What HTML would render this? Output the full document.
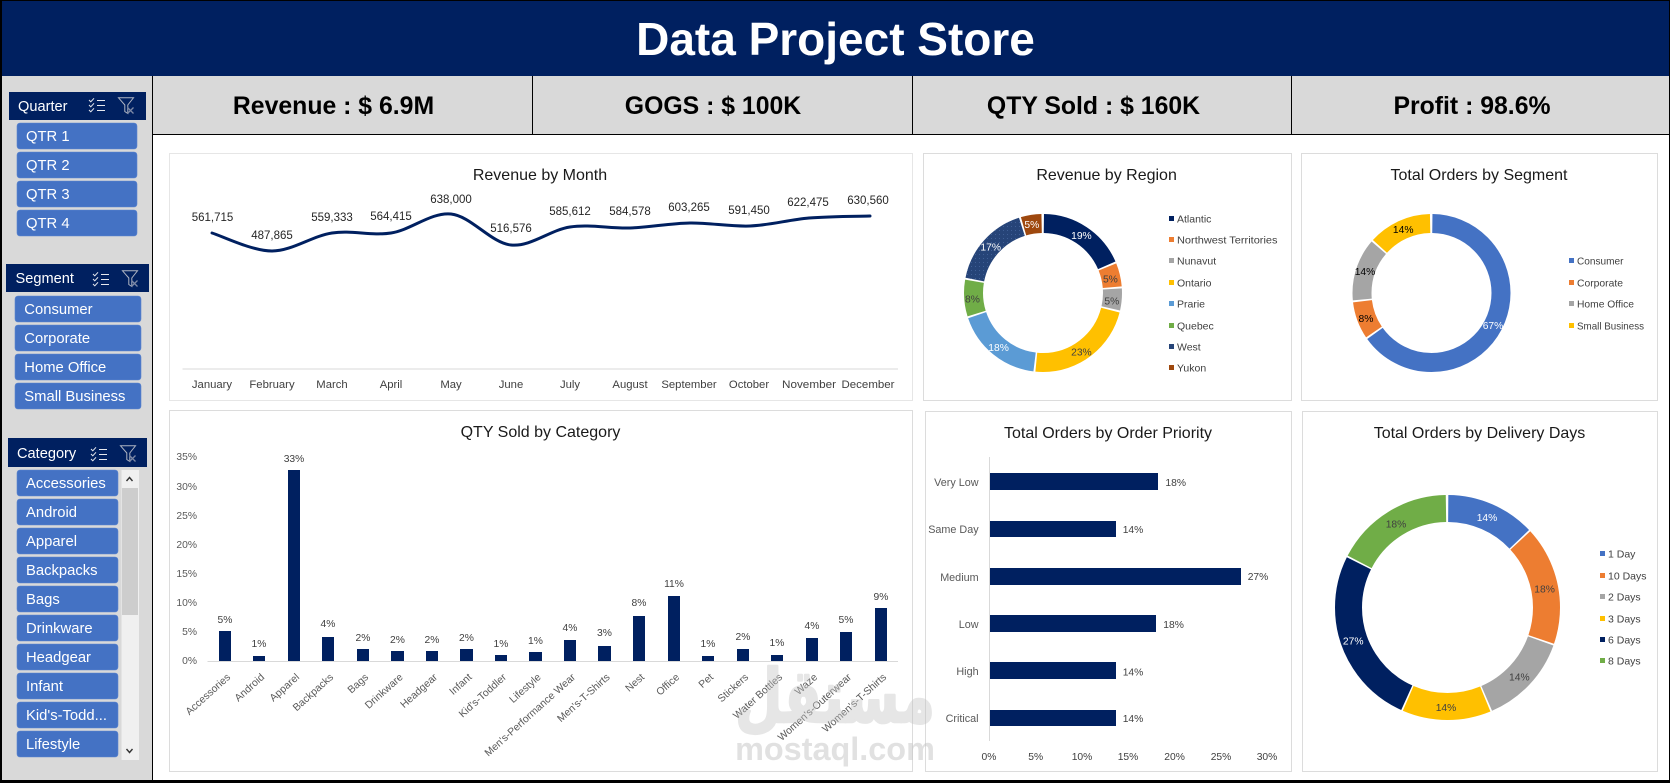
<!DOCTYPE html>
<html lang="en">
<head>
<meta charset="utf-8">
<title>Data Project Store</title>
<style>
html,body{margin:0;padding:0;background:#000;width:1670px;height:783px;overflow:hidden}
svg{display:block}
text{font-family:"Liberation Sans",Arial,sans-serif}
.t{font-size:16px;fill:#1a1a1a;text-anchor:middle}
.k{font-size:24.8px;font-weight:700;fill:#000;text-anchor:middle}
.h{font-size:14.6px;fill:#fff}
.b{font-size:14.8px;fill:#fff}
.d{font-size:11.5px;fill:#262626;text-anchor:middle}
.x{font-size:11.3px;fill:#404040;text-anchor:middle}
.p{font-size:10.3px;fill:#404040;text-anchor:middle}
.w{font-size:10.3px;fill:#fff;text-anchor:middle}
.bk{font-size:10.3px;fill:#000;text-anchor:middle}
.a{font-size:10.3px;fill:#595959;text-anchor:end}
.r{font-size:10.4px;fill:#595959;text-anchor:end}
.c{font-size:10.8px;fill:#595959;text-anchor:end}
.l{font-size:10.5px;fill:#404040}
.pn{fill:#fff;stroke:#dcdcdc;stroke-width:1}
.sb{fill:#4472c4;stroke:#5d86cf;stroke-width:.6}
circle{fill:none}
</style>
</head>
<body>
<svg xmlns="http://www.w3.org/2000/svg" width="1670" height="783" viewBox="0 0 1670 783">
<defs>
<pattern id="dots" width="4" height="4" patternUnits="userSpaceOnUse">
<rect width="4" height="4" fill="#264478"/><rect x="1" y="1" width="1" height="1" fill="#3f5f96"/>
</pattern>
<g id="ms" fill="none">
<path d="M0 2l1.8 1.8L5 .3M0 7l1.8 1.8L5 5.3M0 12l1.8 1.8L5 10.3" stroke="#e6e8ee" stroke-width="1"/>
<path d="M8 2.5h8M8 7.5h8M8 12.5h8" stroke="#e6e8ee" stroke-width="1"/>
</g>
<g id="cf" fill="none">
<path d="M.5 .8H15.5L9.8 8V16.5L6.8 14.5V8Z" stroke="#aeb4c2" stroke-width="1"/>
<path d="M9.5 10.5l6 6M15.5 10.5l-6 6" stroke="#7d89a6" stroke-width="1.3"/>
</g>
</defs>

<rect width="1670" height="783" fill="#000"/>
<rect x="2" y="1" width="1667" height="75" fill="#002060"/>
<text x="835.5" y="55" font-size="46" font-weight="700" fill="#fff" text-anchor="middle">Data Project Store</text>

<!-- sidebar -->
<rect x="2" y="76" width="150" height="704" fill="#d9d9d9"/>
<!-- KPI -->
<rect x="153" y="76" width="1516" height="58" fill="#d9d9d9"/>
<rect x="153" y="135" width="1516" height="645" fill="#fff"/>
<rect x="152" y="76" width="1" height="704" fill="#000"/>
<rect x="153" y="134" width="1516" height="1" fill="#000"/>
<rect x="532" y="76" width="1" height="58" fill="#000"/>
<rect x="912" y="76" width="1" height="58" fill="#000"/>
<rect x="1291" y="76" width="1" height="58" fill="#000"/>
<text class="k" x="333.5" y="114">Revenue : $ 6.9M</text>
<text class="k" x="713" y="114">GOGS : $ 100K</text>
<text class="k" x="1093.5" y="114">QTY Sold : $ 160K</text>
<text class="k" x="1472" y="114">Profit : 98.6%</text>

<!-- Quarter slicer -->
<rect x="9" y="92" width="137" height="28" fill="#002060"/>
<text class="h" x="18" y="111">Quarter</text>
<use href="#ms" x="89" y="98"/><use href="#cf" x="118" y="97"/>
<rect class="sb" x="17" y="123" width="120" height="26" rx="3"/><text class="b" x="26" y="141">QTR 1</text>
<rect class="sb" x="17" y="152" width="120" height="26" rx="3"/><text class="b" x="26" y="170">QTR 2</text>
<rect class="sb" x="17" y="181" width="120" height="26" rx="3"/><text class="b" x="26" y="199">QTR 3</text>
<rect class="sb" x="17" y="210" width="120" height="26" rx="3"/><text class="b" x="26" y="228">QTR 4</text>

<!-- Segment slicer -->
<rect x="6" y="264" width="143" height="28" fill="#002060"/>
<text class="h" x="15.5" y="283">Segment</text>
<use href="#ms" x="93" y="272"/><use href="#cf" x="122" y="270"/>
<rect class="sb" x="15" y="296" width="126" height="26" rx="3"/><text class="b" x="24.3" y="314">Consumer</text>
<rect class="sb" x="15" y="325" width="126" height="26" rx="3"/><text class="b" x="24.3" y="343">Corporate</text>
<rect class="sb" x="15" y="354" width="126" height="26" rx="3"/><text class="b" x="24.3" y="372">Home Office</text>
<rect class="sb" x="15" y="383" width="126" height="26" rx="3"/><text class="b" x="24.3" y="401">Small Business</text>

<!-- Category slicer -->
<rect x="8" y="438" width="139" height="29" fill="#002060"/>
<text class="h" x="17" y="458">Category</text>
<use href="#ms" x="91" y="447"/><use href="#cf" x="120" y="445"/>
<rect class="sb" x="17" y="470" width="101" height="26" rx="3"/><text class="b" x="26" y="488">Accessories</text>
<rect class="sb" x="17" y="499" width="101" height="26" rx="3"/><text class="b" x="26" y="517">Android</text>
<rect class="sb" x="17" y="528" width="101" height="26" rx="3"/><text class="b" x="26" y="546">Apparel</text>
<rect class="sb" x="17" y="557" width="101" height="26" rx="3"/><text class="b" x="26" y="575">Backpacks</text>
<rect class="sb" x="17" y="586" width="101" height="26" rx="3"/><text class="b" x="26" y="604">Bags</text>
<rect class="sb" x="17" y="615" width="101" height="26" rx="3"/><text class="b" x="26" y="633">Drinkware</text>
<rect class="sb" x="17" y="644" width="101" height="26" rx="3"/><text class="b" x="26" y="662">Headgear</text>
<rect class="sb" x="17" y="673" width="101" height="26" rx="3"/><text class="b" x="26" y="691">Infant</text>
<rect class="sb" x="17" y="702" width="101" height="26" rx="3"/><text class="b" x="26" y="720">Kid's-Todd...</text>
<rect class="sb" x="17" y="731" width="101" height="26" rx="3"/><text class="b" x="26" y="749">Lifestyle</text>
<rect x="121.5" y="470" width="17.5" height="290" fill="#f0f0f0"/>
<rect x="122" y="488" width="16" height="127" fill="#cdcdcd"/>
<path d="M126.5 481l3-3.5 3 3.5M126.5 749l3 3.5 3-3.5" fill="none" stroke="#333" stroke-width="1.4"/>

<!-- panels -->
<rect class="pn" x="169.5" y="153.5" width="743" height="247" style="stroke:#e6e6e6"/>
<rect class="pn" x="923.5" y="153.5" width="368" height="247"/>
<rect class="pn" x="1301.5" y="153.5" width="356" height="247"/>
<rect class="pn" x="169.5" y="410.5" width="743" height="361"/>
<rect class="pn" x="925.5" y="411.5" width="366" height="360"/>
<rect class="pn" x="1302.5" y="411.5" width="355" height="360"/>

<!-- Revenue by month -->
<text class="t" x="540" y="180">Revenue by Month</text>
<path d="M212 233C222 236 252 251 272 251C292 251 312 236 332 233C352 230 371 236 391 233C411 230 431 212 451 214C471 216 491 243 511 245C531 247 550 230 570 227C590 224 610 228.7 630 228C650 227.3 670 223.3 690 223C710 222.7 730 226.8 750 226C770 225.2 789 219.7 809 218C829 216.3 860 216.3 870 216" fill="none" stroke="#002060" stroke-width="3" stroke-linecap="round"/>
<text class="d" x="212.5" y="221">561,715</text>
<text class="d" x="272" y="239">487,865</text>
<text class="d" x="332" y="221">559,333</text>
<text class="d" x="391" y="220">564,415</text>
<text class="d" x="451" y="203">638,000</text>
<text class="d" x="511" y="232">516,576</text>
<text class="d" x="570" y="215">585,612</text>
<text class="d" x="630" y="215">584,578</text>
<text class="d" x="689" y="211">603,265</text>
<text class="d" x="749" y="214">591,450</text>
<text class="d" x="808" y="206">622,475</text>
<text class="d" x="868" y="204">630,560</text>
<rect x="182.5" y="368.5" width="715.5" height="1" fill="#d9d9d9"/>
<text class="x" x="212" y="388">January</text>
<text class="x" x="272" y="388">February</text>
<text class="x" x="332" y="388">March</text>
<text class="x" x="391" y="388">April</text>
<text class="x" x="451" y="388">May</text>
<text class="x" x="511" y="388">June</text>
<text class="x" x="570" y="388">July</text>
<text class="x" x="630" y="388">August</text>
<text class="x" x="689" y="388">September</text>
<text class="x" x="749" y="388">October</text>
<text class="x" x="809" y="388" textLength="54" lengthAdjust="spacingAndGlyphs">November</text>
<text class="x" x="868" y="388" textLength="53" lengthAdjust="spacingAndGlyphs">December</text>

<!-- Revenue by region -->
<text class="t" x="1106.6" y="180">Revenue by Region</text>
<g transform="rotate(-90 1043 293)" stroke-width="19">
<circle cx="1043" cy="293" r="69.5" pathLength="100" stroke="#002060" stroke-dasharray="18.3 100" stroke-dashoffset="-0.2"/>
<circle cx="1043" cy="293" r="69.5" pathLength="100" stroke="#ED7D31" stroke-dasharray="4.8 100" stroke-dashoffset="-18.9"/>
<circle cx="1043" cy="293" r="69.5" pathLength="100" stroke="#A5A5A5" stroke-dasharray="4.5 100" stroke-dashoffset="-24.1"/>
<circle cx="1043" cy="293" r="69.5" pathLength="100" stroke="#FFC000" stroke-dasharray="22.6 100" stroke-dashoffset="-29"/>
<circle cx="1043" cy="293" r="69.5" pathLength="100" stroke="#5B9BD5" stroke-dasharray="17.9 100" stroke-dashoffset="-52"/>
<circle cx="1043" cy="293" r="69.5" pathLength="100" stroke="#70AD47" stroke-dasharray="7.5 100" stroke-dashoffset="-70.3"/>
<circle cx="1043" cy="293" r="69.5" pathLength="100" stroke="url(#dots)" stroke-dasharray="17 100" stroke-dashoffset="-78.2"/>
<circle cx="1043" cy="293" r="69.5" pathLength="100" stroke="#9E480E" stroke-dasharray="4.2 100" stroke-dashoffset="-95.6"/>
</g>
<text class="w" x="1081.4" y="239">19%</text>
<text class="p" x="1110.4" y="282.5">5%</text>
<text class="p" x="1111.8" y="304.5">5%</text>
<text class="p" x="1081.4" y="355.5">23%</text>
<text class="w" x="998.6" y="351">18%</text>
<text class="p" x="972.5" y="302.5">8%</text>
<text class="w" x="990.7" y="250.5">17%</text>
<text class="w" x="1031.8" y="228">5%</text>
<rect x="1169" y="216" width="5" height="5" fill="#002060"/><text class="l" x="1177" y="222.5">Atlantic</text>
<rect x="1169" y="237" width="5" height="5" fill="#ED7D31"/><text class="l" x="1177" y="243.5" textLength="100.5" lengthAdjust="spacingAndGlyphs">Northwest Territories</text>
<rect x="1169" y="258" width="5" height="5" fill="#A5A5A5"/><text class="l" x="1177" y="264.5">Nunavut</text>
<rect x="1169" y="280" width="5" height="5" fill="#FFC000"/><text class="l" x="1177" y="286.5">Ontario</text>
<rect x="1169" y="301" width="5" height="5" fill="#5B9BD5"/><text class="l" x="1177" y="307.5">Prarie</text>
<rect x="1169" y="323" width="5" height="5" fill="#70AD47"/><text class="l" x="1177" y="329.5">Quebec</text>
<rect x="1169" y="344" width="5" height="5" fill="#264478"/><text class="l" x="1177" y="350.5">West</text>
<rect x="1169" y="365" width="5" height="5" fill="#9E480E"/><text class="l" x="1177" y="371.5">Yukon</text>

<!-- Segment donut -->
<text class="t" x="1479" y="180">Total Orders by Segment</text>
<g transform="rotate(-90 1431.5 293)" stroke-width="19">
<circle cx="1431.5" cy="293" r="69.5" pathLength="100" stroke="#4472C4" stroke-dasharray="65 100" stroke-dashoffset="-0.2"/>
<circle cx="1431.5" cy="293" r="69.5" pathLength="100" stroke="#ED7D31" stroke-dasharray="7.6 100" stroke-dashoffset="-65.6"/>
<circle cx="1431.5" cy="293" r="69.5" pathLength="100" stroke="#A5A5A5" stroke-dasharray="12.8 100" stroke-dashoffset="-73.6"/>
<circle cx="1431.5" cy="293" r="69.5" pathLength="100" stroke="#FFC000" stroke-dasharray="13 100" stroke-dashoffset="-86.8"/>
</g>
<text class="w" x="1493" y="329">67%</text>
<text class="bk" x="1366" y="322">8%</text>
<text class="bk" x="1365" y="275">14%</text>
<text class="bk" x="1403.2" y="233">14%</text>
<rect x="1569" y="258" width="5" height="5" fill="#4472C4"/><text class="l" x="1577" y="264.5" textLength="46.5" lengthAdjust="spacingAndGlyphs">Consumer</text>
<rect x="1569" y="280" width="5" height="5" fill="#ED7D31"/><text class="l" x="1577" y="286.5" textLength="46" lengthAdjust="spacingAndGlyphs">Corporate</text>
<rect x="1569" y="301" width="5" height="5" fill="#A5A5A5"/><text class="l" x="1577" y="307.5" textLength="57" lengthAdjust="spacingAndGlyphs">Home Office</text>
<rect x="1569" y="323" width="5" height="5" fill="#FFC000"/><text class="l" x="1577" y="329.5" textLength="67" lengthAdjust="spacingAndGlyphs">Small Business</text>

<!-- QTY bars -->
<text class="t" x="540.5" y="437">QTY Sold by Category</text>
<text class="a" x="197" y="460">35%</text>
<text class="a" x="197" y="490">30%</text>
<text class="a" x="197" y="519">25%</text>
<text class="a" x="197" y="548">20%</text>
<text class="a" x="197" y="577">15%</text>
<text class="a" x="197" y="606">10%</text>
<text class="a" x="197" y="635">5%</text>
<text class="a" x="197" y="664">0%</text>
<rect x="207.5" y="661" width="690.5" height="1" fill="#d9d9d9"/>
<g fill="#002060">
<rect x="219" y="631" width="12" height="30"/>
<rect x="253" y="656" width="12" height="5"/>
<rect x="288" y="470" width="12" height="191"/>
<rect x="322" y="637" width="12" height="24"/>
<rect x="357" y="649" width="12" height="12"/>
<rect x="391" y="651" width="13" height="10"/>
<rect x="426" y="651" width="12" height="10"/>
<rect x="460" y="649" width="13" height="12"/>
<rect x="495" y="655" width="12" height="6"/>
<rect x="529" y="652" width="13" height="9"/>
<rect x="564" y="640" width="12" height="21"/>
<rect x="598" y="646" width="13" height="15"/>
<rect x="633" y="616" width="12" height="45"/>
<rect x="668" y="596" width="12" height="65"/>
<rect x="702" y="656" width="12" height="5"/>
<rect x="737" y="649" width="12" height="12"/>
<rect x="771" y="655" width="12" height="6"/>
<rect x="806" y="638" width="12" height="23"/>
<rect x="840" y="632" width="12" height="29"/>
<rect x="875" y="608" width="12" height="53"/>
</g>
<text class="p" x="225" y="623">5%</text>
<text class="p" x="259" y="647">1%</text>
<text class="p" x="294" y="462">33%</text>
<text class="p" x="328" y="627">4%</text>
<text class="p" x="363" y="641">2%</text>
<text class="p" x="397.5" y="643">2%</text>
<text class="p" x="432" y="643">2%</text>
<text class="p" x="466.5" y="641">2%</text>
<text class="p" x="501" y="647">1%</text>
<text class="p" x="535.5" y="644">1%</text>
<text class="p" x="570" y="631">4%</text>
<text class="p" x="604.5" y="636">3%</text>
<text class="p" x="639" y="606">8%</text>
<text class="p" x="674" y="587">11%</text>
<text class="p" x="708" y="647">1%</text>
<text class="p" x="743" y="640">2%</text>
<text class="p" x="777" y="646">1%</text>
<text class="p" x="812" y="629">4%</text>
<text class="p" x="846" y="623">5%</text>
<text class="p" x="881" y="600">9%</text>
<text class="r" transform="translate(231,678) rotate(-42)">Accessories</text>
<text class="r" transform="translate(265,678) rotate(-42)">Android</text>
<text class="r" transform="translate(300,678) rotate(-42)">Apparel</text>
<text class="r" transform="translate(334,678) rotate(-42)">Backpacks</text>
<text class="r" transform="translate(369,678) rotate(-42)">Bags</text>
<text class="r" transform="translate(403.5,678) rotate(-42)">Drinkware</text>
<text class="r" transform="translate(438,678) rotate(-42)">Headgear</text>
<text class="r" transform="translate(472.5,678) rotate(-42)">Infant</text>
<text class="r" transform="translate(507,678) rotate(-42)">Kid's-Toddler</text>
<text class="r" transform="translate(541.5,678) rotate(-42)">Lifestyle</text>
<text class="r" transform="translate(576,678) rotate(-42)">Men's-Performance Wear</text>
<text class="r" transform="translate(610.5,678) rotate(-42)">Men's-T-Shirts</text>
<text class="r" transform="translate(645,678) rotate(-42)">Nest</text>
<text class="r" transform="translate(680,678) rotate(-42)">Office</text>
<text class="r" transform="translate(714,678) rotate(-42)">Pet</text>
<text class="r" transform="translate(749,678) rotate(-42)">Stickers</text>
<text class="r" transform="translate(783,678) rotate(-42)">Water Bottles</text>
<text class="r" transform="translate(818,678) rotate(-42)">Waze</text>
<text class="r" transform="translate(852,678) rotate(-42)">Women's-Outerwear</text>
<text class="r" transform="translate(887,678) rotate(-42)">Women's-T-Shirts</text>

<!-- Priority -->
<text class="t" x="1108" y="438">Total Orders by Order Priority</text>
<rect x="989" y="457" width="1" height="284" fill="#d9d9d9"/>
<g fill="#002060">
<rect x="990" y="473" width="168" height="17"/>
<rect x="990" y="521" width="126" height="16"/>
<rect x="990" y="568" width="251" height="17"/>
<rect x="990" y="615" width="166" height="17"/>
<rect x="990" y="662" width="126" height="17"/>
<rect x="990" y="710" width="126" height="16"/>
</g>
<text class="p" x="1175.7" y="486">18%</text>
<text class="p" x="1133" y="533">14%</text>
<text class="p" x="1258" y="580">27%</text>
<text class="p" x="1173.6" y="628">18%</text>
<text class="p" x="1133" y="675.5">14%</text>
<text class="p" x="1133" y="722">14%</text>
<text class="c" x="978.6" y="486">Very Low</text>
<text class="c" x="978.6" y="533">Same Day</text>
<text class="c" x="978.6" y="581">Medium</text>
<text class="c" x="978.6" y="628">Low</text>
<text class="c" x="978.6" y="675">High</text>
<text class="c" x="978.6" y="722">Critical</text>
<text class="p" x="989" y="760">0%</text>
<text class="p" x="1035.7" y="760">5%</text>
<text class="p" x="1082" y="760">10%</text>
<text class="p" x="1128" y="760">15%</text>
<text class="p" x="1174.6" y="760">20%</text>
<text class="p" x="1221" y="760">25%</text>
<text class="p" x="1267" y="760">30%</text>

<!-- Delivery -->
<text class="t" x="1479.5" y="438">Total Orders by Delivery Days</text>
<g transform="rotate(-90 1447.5 607.5)" stroke-width="27">
<circle cx="1447.5" cy="607.5" r="99" pathLength="100" stroke="#4472C4" stroke-dasharray="12.8 100" stroke-dashoffset="-0.12"/>
<circle cx="1447.5" cy="607.5" r="99" pathLength="100" stroke="#ED7D31" stroke-dasharray="17.1 100" stroke-dashoffset="-13.17"/>
<circle cx="1447.5" cy="607.5" r="99" pathLength="100" stroke="#A5A5A5" stroke-dasharray="13.05 100" stroke-dashoffset="-30.52"/>
<circle cx="1447.5" cy="607.5" r="99" pathLength="100" stroke="#FFC000" stroke-dasharray="12.75 100" stroke-dashoffset="-43.82"/>
<circle cx="1447.5" cy="607.5" r="99" pathLength="100" stroke="#002060" stroke-dasharray="25.65 100" stroke-dashoffset="-56.82"/>
<circle cx="1447.5" cy="607.5" r="99" pathLength="100" stroke="#70AD47" stroke-dasharray="17.15 100" stroke-dashoffset="-82.72"/>
</g>
<text class="w" x="1487" y="521">14%</text>
<text class="p" x="1544.6" y="592.5">18%</text>
<text class="p" x="1519.3" y="680.5">14%</text>
<text class="p" x="1446" y="711">14%</text>
<text class="w" x="1353.2" y="644.5">27%</text>
<text class="p" x="1396" y="527.5">18%</text>
<rect x="1600" y="551" width="5" height="5" fill="#4472C4"/><text class="l" x="1608" y="557.5">1 Day</text>
<rect x="1600" y="573" width="5" height="5" fill="#ED7D31"/><text class="l" x="1608" y="579.5">10 Days</text>
<rect x="1600" y="594" width="5" height="5" fill="#A5A5A5"/><text class="l" x="1608" y="600.5">2 Days</text>
<rect x="1600" y="616" width="5" height="5" fill="#FFC000"/><text class="l" x="1608" y="622.5">3 Days</text>
<rect x="1600" y="637" width="5" height="5" fill="#002060"/><text class="l" x="1608" y="643.5">6 Days</text>
<rect x="1600" y="658" width="5" height="5" fill="#70AD47"/><text class="l" x="1608" y="664.5">8 Days</text>

<!-- watermark -->
<g fill="#c4c4c4">
<text x="835" y="722" opacity=".42" font-size="74" font-weight="700" text-anchor="middle" stroke="#c4c4c4" stroke-width="2.5" stroke-linejoin="round" style="font-family:'DejaVu Sans',sans-serif" textLength="200" lengthAdjust="spacingAndGlyphs">مستقل</text>
<text x="835" y="760" opacity=".5" font-size="32.4" font-weight="700" text-anchor="middle">mostaql.com</text>
</g>
</svg>
</body>
</html>
